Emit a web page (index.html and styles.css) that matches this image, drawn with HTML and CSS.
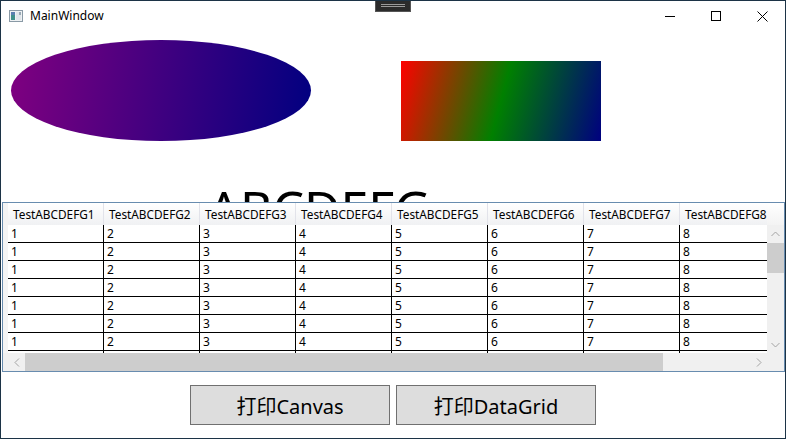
FILE: index.html
```html
<!DOCTYPE html>
<html>
<head>
<meta charset="utf-8">
<link rel="stylesheet" href="styles.css">
</head>
<body>
<div class="window">
  <div class="handle"><span></span><span></span></div>
  <div class="titlebar">
    <svg class="appicon" width="16" height="16" viewBox="0 0 16 16">
      <rect x="1.5" y="2.5" width="13" height="11" fill="#eef1f3" stroke="#8a9aa6"/>
      <rect x="3" y="4" width="4" height="8" fill="#3f8f8a"/>
      <rect x="3" y="4" width="4" height="3" fill="#5a7fb0"/>
      <rect x="8" y="4" width="5" height="8" fill="#dfe5ea"/>
      <rect x="11" y="4" width="2" height="3" fill="#9aa9b5"/>
    </svg>
    <span class="title">MainWindow</span>
    <span class="spacer"></span>
    <span class="ctl"><svg width="10" height="10" viewBox="0 0 10 10"><line x1="0" y1="5.5" x2="10" y2="5.5" stroke="#000"/></svg></span>
    <span class="ctl"><svg width="10" height="10" viewBox="0 0 10 10"><rect x="0.5" y="0.5" width="9" height="9" fill="none" stroke="#000"/></svg></span>
    <span class="ctl"><svg width="11" height="11" viewBox="0 0 11 11"><path d="M0.5 0.5 L10.5 10.5 M10.5 0.5 L0.5 10.5" stroke="#000" fill="none"/></svg></span>
  </div>

  <div class="canvas">
    <div class="ellipse"></div>
    <div class="rect"></div>
    <div class="bigtext">ABCDEFG</div>
  </div>

  <div class="datagrid">
    <div class="header">
      <div class="corner"></div>
      <div class="hcell">TestABCDEFG1</div>
      <div class="hcell">TestABCDEFG2</div>
      <div class="hcell">TestABCDEFG3</div>
      <div class="hcell">TestABCDEFG4</div>
      <div class="hcell">TestABCDEFG5</div>
      <div class="hcell">TestABCDEFG6</div>
      <div class="hcell">TestABCDEFG7</div>
      <div class="hcell">TestABCDEFG8</div>
    </div>
    <div class="hfill"></div>
    <div class="body">
      <div class="row"><div class="rh"></div><div class="cell">1</div><div class="cell">2</div><div class="cell">3</div><div class="cell">4</div><div class="cell">5</div><div class="cell">6</div><div class="cell">7</div><div class="cell">8</div></div>
      <div class="row"><div class="rh"></div><div class="cell">1</div><div class="cell">2</div><div class="cell">3</div><div class="cell">4</div><div class="cell">5</div><div class="cell">6</div><div class="cell">7</div><div class="cell">8</div></div>
      <div class="row"><div class="rh"></div><div class="cell">1</div><div class="cell">2</div><div class="cell">3</div><div class="cell">4</div><div class="cell">5</div><div class="cell">6</div><div class="cell">7</div><div class="cell">8</div></div>
      <div class="row"><div class="rh"></div><div class="cell">1</div><div class="cell">2</div><div class="cell">3</div><div class="cell">4</div><div class="cell">5</div><div class="cell">6</div><div class="cell">7</div><div class="cell">8</div></div>
      <div class="row"><div class="rh"></div><div class="cell">1</div><div class="cell">2</div><div class="cell">3</div><div class="cell">4</div><div class="cell">5</div><div class="cell">6</div><div class="cell">7</div><div class="cell">8</div></div>
      <div class="row"><div class="rh"></div><div class="cell">1</div><div class="cell">2</div><div class="cell">3</div><div class="cell">4</div><div class="cell">5</div><div class="cell">6</div><div class="cell">7</div><div class="cell">8</div></div>
      <div class="row"><div class="rh"></div><div class="cell">1</div><div class="cell">2</div><div class="cell">3</div><div class="cell">4</div><div class="cell">5</div><div class="cell">6</div><div class="cell">7</div><div class="cell">8</div></div>
      <div class="row"><div class="rh"></div><div class="cell"></div><div class="cell"></div><div class="cell"></div><div class="cell"></div><div class="cell"></div><div class="cell"></div><div class="cell"></div><div class="cell"></div></div>
    </div>
    <div class="vscroll">
      <div class="arrow"><svg width="9" height="6" viewBox="0 0 9 6"><path d="M0.5 5 L4.5 1 L8.5 5" fill="none" stroke="#a3a3a3"/></svg></div>
      <div class="vthumb"></div>
      <div class="vtrack"></div>
      <div class="arrow"><svg width="9" height="6" viewBox="0 0 9 6"><path d="M0.5 1 L4.5 5 L8.5 1" fill="none" stroke="#a3a3a3"/></svg></div>
    </div>
    <div class="hscroll">
      <div class="harrow"><svg width="6" height="9" viewBox="0 0 6 9"><path d="M5 0.5 L1 4.5 L5 8.5" fill="none" stroke="#a3a3a3"/></svg></div>
      <div class="hthumb"></div>
      <div class="htrack"></div>
      <div class="harrow"><svg width="6" height="9" viewBox="0 0 6 9"><path d="M1 0.5 L5 4.5 L1 8.5" fill="none" stroke="#a3a3a3"/></svg></div>
    </div>
    <div class="scorner"></div>
  </div>

  <div class="buttons">
    <button class="btn">打印Canvas</button>
    <button class="btn">打印DataGrid</button>
  </div>
</div>
</body>
</html>
```

FILE: styles.css
```css
html, body {
  margin: 0;
  padding: 0;
  background: #ffffff;
}

.window {
  position: relative;
  width: 786px;
  height: 439px;
  box-sizing: border-box;
  border: 1px solid #1c3346;
  background: #ffffff;
  display: flex;
  flex-direction: column;
  overflow: hidden;
  font-family: "Noto Sans", "Noto Sans CJK SC", sans-serif;
}

.handle {
  position: absolute;
  left: 374px;
  top: -1px;
  width: 36px;
  height: 12px;
  box-sizing: border-box;
  background: #2b2b2b;
  border: 1px solid #555555;
  border-top: none;
  display: flex;
  flex-direction: column;
  align-items: center;
  justify-content: center;
  gap: 1px;
  z-index: 5;
}

.handle span {
  display: block;
  width: 24px;
  height: 1px;
  background: #9a9a9a;
}

.titlebar {
  height: 30px;
  flex: none;
  display: flex;
  align-items: center;
  padding-left: 7px;
}

.appicon {
  flex: none;
  margin-right: 6px;
}

.title {
  font-size: 12px;
  color: #000000;
  line-height: 1;
}

.spacer {
  flex: 1;
}

.ctl {
  width: 46px;
  height: 30px;
  display: flex;
  align-items: center;
  justify-content: center;
}

.canvas {
  position: relative;
  height: 171px;
  flex: none;
}

.ellipse {
  position: absolute;
  left: 10px;
  top: 9px;
  width: 300px;
  height: 101px;
  border-radius: 50%;
  background: linear-gradient(97deg, #800080 0%, #000080 100%);
}

.rect {
  position: absolute;
  left: 400px;
  top: 30px;
  width: 200px;
  height: 80px;
  background: linear-gradient(105deg, #ff0000 0%, #008000 50%, #000080 100%);
}

.bigtext {
  position: absolute;
  left: 207px;
  top: 152px;
  font-size: 50px;
  line-height: 1;
  color: #000000;
  white-space: nowrap;
}

.datagrid {
  position: relative;
  z-index: 2;
  flex: none;
  margin-left: 1px;
  width: 783px;
  height: 170px;
  box-sizing: border-box;
  border: 1px solid #688caf;
  background: #ffffff;
  display: grid;
  grid-template-columns: 764px 17px;
  grid-template-rows: 22px 128px 18px;
  font-size: 12px;
  color: #000000;
}

.header {
  display: flex;
  overflow: hidden;
  background: linear-gradient(#ffffff, #f0f1f3);
}

.corner {
  flex: none;
  width: 5px;
  background: #f3f3f3;
}

.hcell {
  flex: none;
  width: 96px;
  box-sizing: border-box;
  padding-left: 5px;
  border-right: 1px solid #e2e3ea;
  display: flex;
  align-items: center;
  white-space: nowrap;
  overflow: hidden;
  font-size: 11.8px;
}

.hfill {
  background: linear-gradient(#ffffff, #f3f3f3);
}

.body {
  overflow: hidden;
}

.row {
  display: flex;
  height: 18px;
}

.rh {
  flex: none;
  width: 5px;
  background: #f4f4f4;
}

.cell {
  flex: none;
  width: 96px;
  height: 18px;
  box-sizing: border-box;
  border-right: 1px solid #000000;
  border-bottom: 1px solid #000000;
  padding-left: 3px;
  line-height: 17px;
  white-space: nowrap;
  overflow: hidden;
}

.vscroll {
  background: #f0f0f0;
  display: flex;
  flex-direction: column;
}

.arrow {
  height: 17px;
  flex: none;
  display: flex;
  align-items: center;
  justify-content: center;
}

.vthumb {
  flex: none;
  height: 30px;
  margin-top: 1px;
  background: #cdcdcd;
}

.vtrack {
  flex: 1;
}

.hscroll {
  background: #f0f0f0;
  display: flex;
  padding-left: 5px;
}

.harrow {
  width: 17px;
  flex: none;
  display: flex;
  align-items: center;
  justify-content: center;
}

.hthumb {
  flex: none;
  width: 638px;
  background: #cdcdcd;
}

.htrack {
  flex: 1;
}

.scorner {
  background: #f0f0f0;
}

.buttons {
  flex: none;
  display: flex;
  justify-content: center;
  gap: 6px;
  padding-top: 13px;
}

.btn {
  width: 200px;
  height: 40px;
  box-sizing: border-box;
  border: 1px solid #707070;
  background: #dddddd;
  font-family: "Noto Sans", "Noto Sans CJK SC", sans-serif;
  font-size: 20px;
  color: #000000;
  padding: 0;
  margin: 0;
}
```
